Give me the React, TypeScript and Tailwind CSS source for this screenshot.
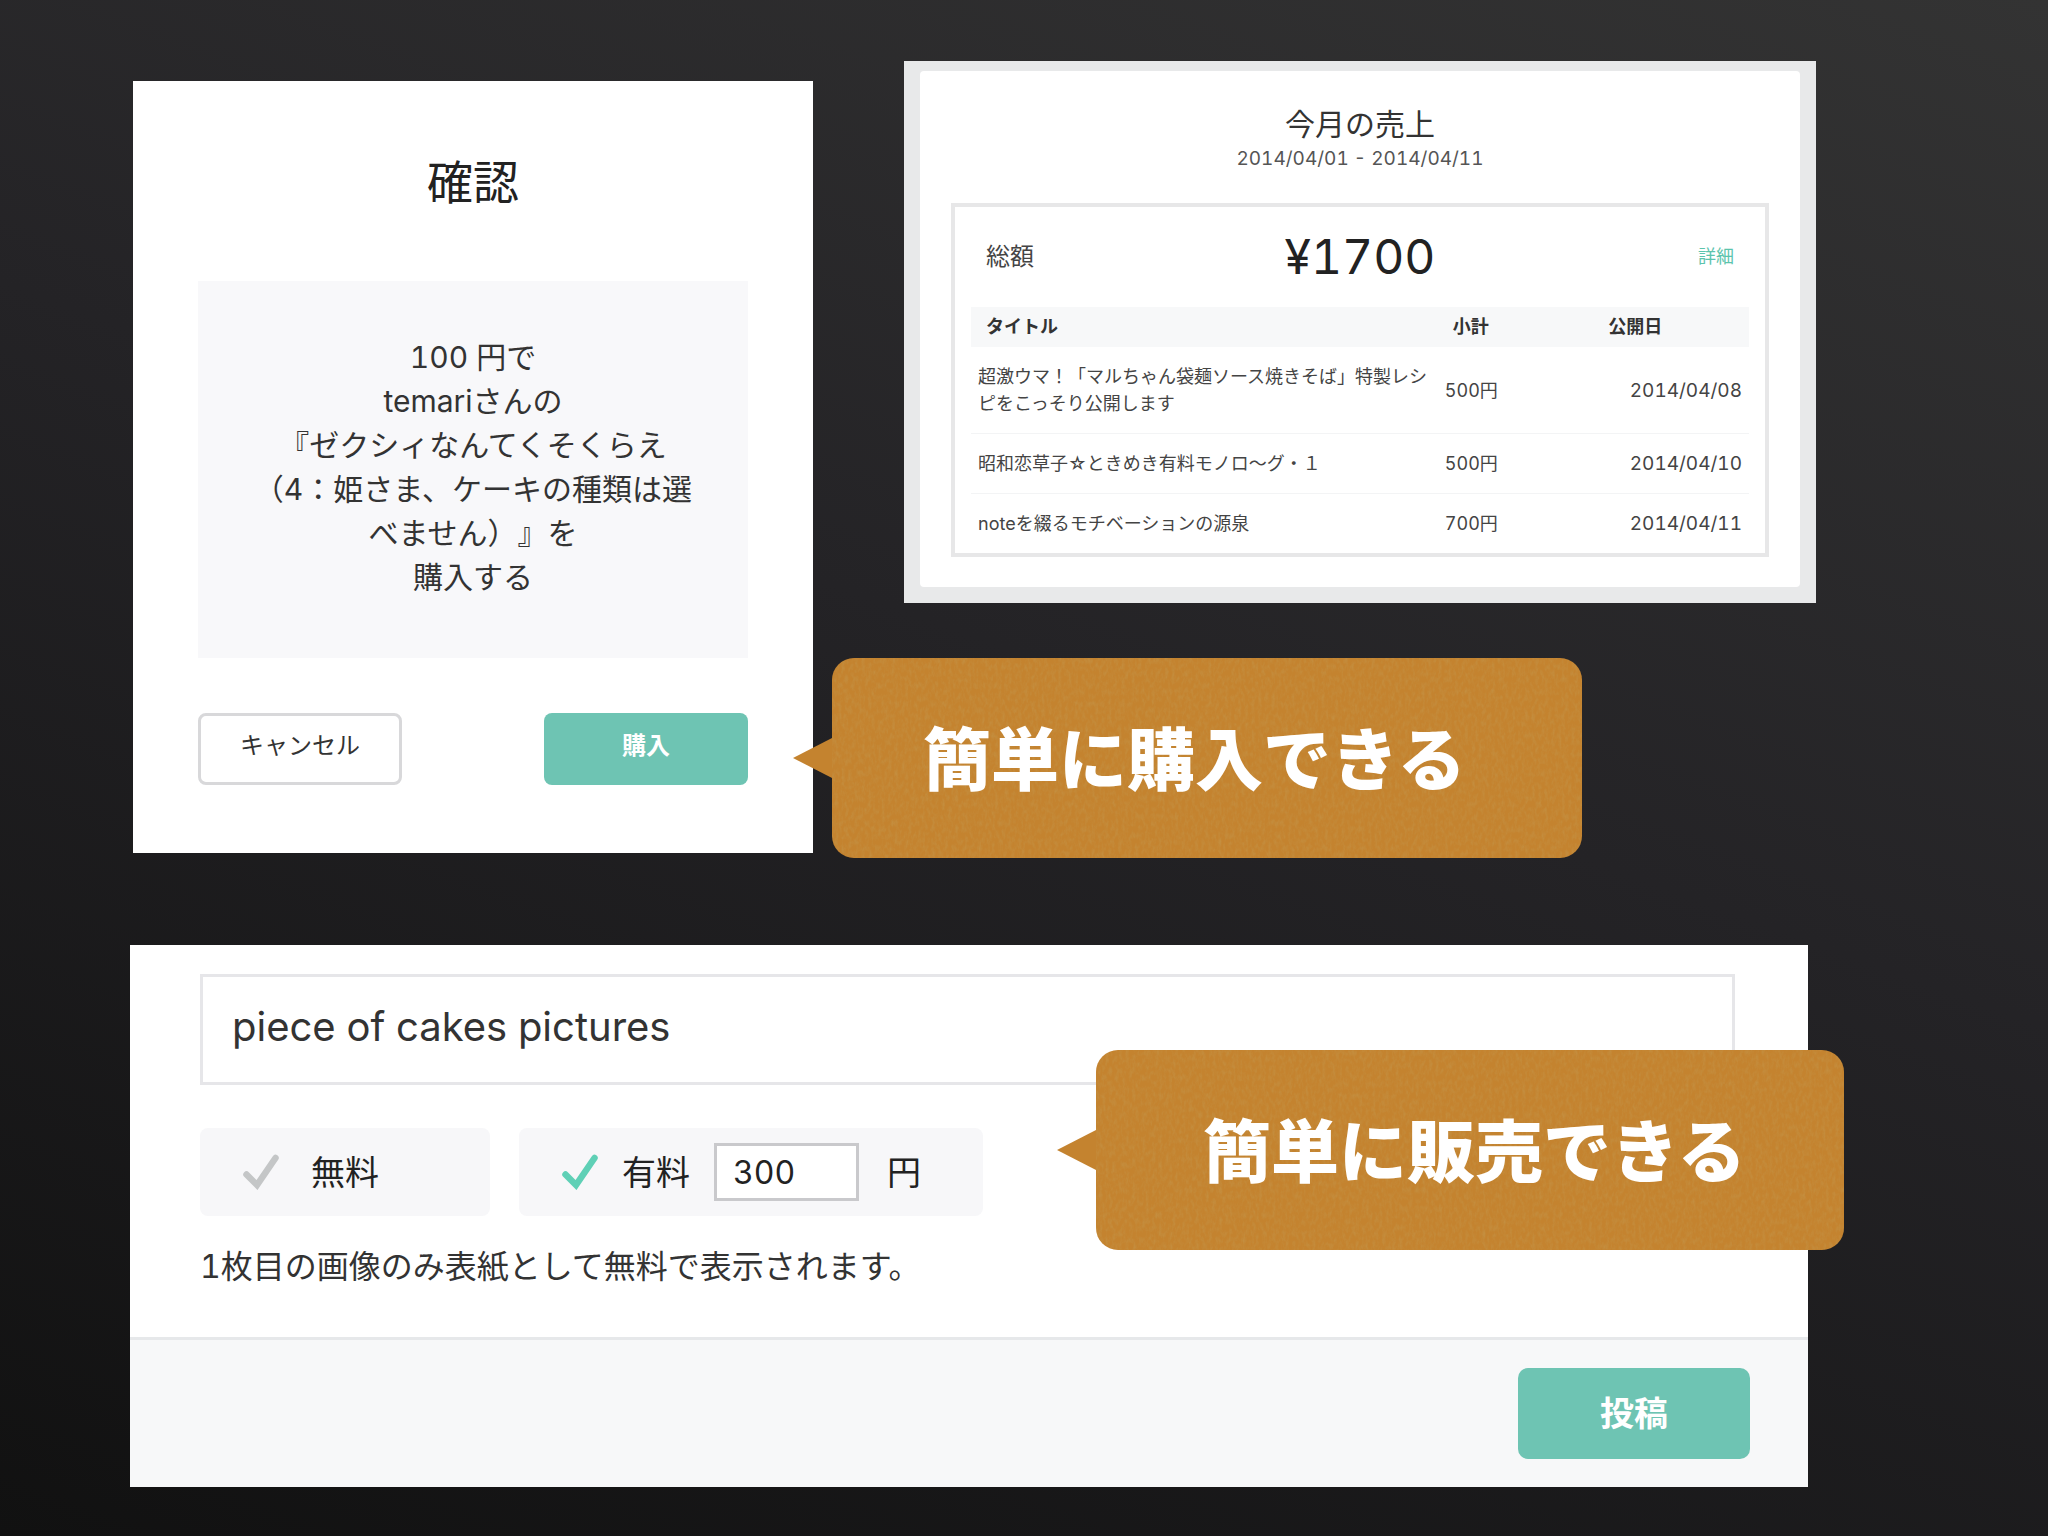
import { useState } from "react";

const sales = [
  { title: "超激ウマ！「マルちゃん袋麺ソース焼きそば」特製レシピをこっそり公開します", amount: "500円", date: "2014/04/08" },
  { title: "昭和恋草子☆ときめき有料モノロ〜グ・１", amount: "500円", date: "2014/04/10" },
  { title: "noteを綴るモチベーションの源泉", amount: "700円", date: "2014/04/11" },
];

function CheckIcon({ active }: { active: boolean }) {
  return (
    <svg
      viewBox="0 0 36 36"
      className={active ? "size-9 text-[#5fd0b6]" : "size-9 text-[#c4c6c7]"}
      fill="none"
      stroke="currentColor"
      aria-hidden="true"
    >
      <path d="M3.5 20.5 L14 31 L32.5 4" strokeWidth="6.5" strokeLinecap="round" strokeLinejoin="miter" />
    </svg>
  );
}

function Callout({ children, className }: { children: string; className: string }) {
  return (
    <div className={`absolute z-10 flex h-[200px] items-center rounded-[22px] bg-[#c4832f] pt-1 ${className}`}>
      <svg viewBox="0 0 40 40" className="absolute top-20 right-full h-10 w-[39px]" preserveAspectRatio="none" aria-hidden="true">
        <path d="M40 0 L0 20 L40 40 Z" fill="#c4832f" />
      </svg>
      <svg className="absolute inset-0 size-full rounded-[22px] opacity-40" aria-hidden="true">
        <filter id="paper" x="0" y="0" width="100%" height="100%">
          <feTurbulence type="fractalNoise" baseFrequency="0.3 0.16" numOctaves="3" seed="4" />
          <feColorMatrix values="0 0 0 0 0.55  0 0 0 0 0.35  0 0 0 0 0.1  1.8 0 0 0 -0.7" />
        </filter>
        <rect width="100%" height="100%" filter="url(#paper)" />
      </svg>
      <p className="relative text-[68px] leading-none font-black whitespace-nowrap text-white">{children}</p>
    </div>
  );
}

function ConfirmDialog() {
  return (
    <section className="relative mt-5 bg-white px-[65px] pt-[77px] pb-[68px]">
      <h2 className="text-center text-[46px] leading-[48px] text-[#222]">確認</h2>
      <p className="mt-[75px] bg-[#f8f8fa] pt-[54px] pb-[59px] text-center text-[30px] leading-[44px] text-[#333]">
        100 円で
        <br />
        temariさんの
        <br />
        『ゼクシィなんてくそくらえ
        <br />
        （4：姫さま、ケーキの種類は選
        <br />
        べません）』を
        <br />
        購入する
      </p>
      <div className="mt-[55px] flex justify-between">
        <button className="h-[72px] w-[204px] rounded-lg border-3 border-[#d8d8da] bg-white pb-1.5 text-2xl text-[#333]">
          キャンセル
        </button>
        <button className="h-[72px] w-[204px] rounded-lg bg-[#6ec4b3] pb-1.5 text-2xl font-bold text-white">購入</button>
      </div>
      <Callout className="top-[577px] left-full ml-[19px] w-[750px] pl-[91px]">簡単に購入できる</Callout>
    </section>
  );
}

function SalesReport() {
  return (
    <section className="self-start bg-[#e8e9ea] px-4 pt-2.5 pb-4">
      <div className="rounded-sm bg-white px-[31px] pt-[35px] pb-[30px]">
        <h2 className="text-center text-[30px] leading-9 text-[#333]">今月の売上</h2>
        <p className="mt-[3px] text-center text-[19px] leading-7 text-[#555]">2014/04/01 - 2014/04/11</p>
        <div className="mt-[30px] border-4 border-[#e7e7e8] px-4">
          <div className="grid grid-cols-3 items-center px-[15px] py-5">
            <span className="text-2xl text-[#444]">総額</span>
            <strong className="text-center text-[48px] leading-[60px] font-normal text-[#222]">¥1700</strong>
            <a href="#detail" className="justify-self-end text-lg text-[#5cc4ad]">
              詳細
            </a>
          </div>
          <table className="w-full table-fixed text-left text-[#444]">
            <thead className="bg-[#f7f8f9] text-lg text-[#333]">
              <tr className="h-10">
                <th className="w-[60%] pl-[15px] font-bold">タイトル</th>
                <th className="w-[21%] pl-[15px] font-bold">小計</th>
                <th className="w-[19%] pl-[7px] font-bold">公開日</th>
              </tr>
            </thead>
            <tbody>
              {sales.map((s) => (
                <tr key={s.date} className="border-b border-[#f3f4f5] last:border-b-0">
                  <td className="py-4 pl-[7px] text-lg leading-[27px]">{s.title}</td>
                  <td className="pl-[7px] text-lg leading-[27px]">{s.amount}</td>
                  <td className="pr-[7px] text-right text-[19px] leading-[27px]">{s.date}</td>
                </tr>
              ))}
            </tbody>
          </table>
        </div>
      </div>
    </section>
  );
}

function PostForm() {
  const [title, setTitle] = useState("piece of cakes pictures");
  const [price, setPrice] = useState("300");
  const [paid, setPaid] = useState(true);

  return (
    <form className="relative mt-[92px] mr-2 bg-white" onSubmit={(e) => e.preventDefault()}>
      <div className="pt-[29px] pr-[73px] pb-[50px] pl-[70px]">
        <input
          aria-label="タイトル"
          value={title}
          onChange={(e) => setTitle(e.target.value)}
          className="h-[111px] w-full border-3 border-[#e6e6e9] bg-white px-[29px] pb-1.5 text-[40px] text-[#333] outline-none"
        />
        <div className="mt-[43px] flex gap-[29px] text-[34px] text-[#222]">
          <label className="flex h-[88px] w-[290px] items-center gap-8 rounded-lg bg-[#f7f7f9] pl-[43px]">
            <input type="radio" name="plan" className="sr-only" checked={!paid} onChange={() => setPaid(false)} />
            <CheckIcon active={!paid} />
            無料
          </label>
          <div className="flex h-[88px] w-[464px] items-center rounded-lg bg-[#f7f7f9] pl-[43px]">
            <label className="flex items-center gap-6">
              <input type="radio" name="plan" className="sr-only" checked={paid} onChange={() => setPaid(true)} />
              <CheckIcon active={paid} />
              有料
            </label>
            <input
              id="price"
              value={price}
              onChange={(e) => setPrice(e.target.value)}
              className="ml-6 h-[58px] w-[145px] border-3 border-[#c9c9cc] bg-white px-4 text-[32px] outline-none"
            />
            <label htmlFor="price" className="ml-7">
              円
            </label>
          </div>
        </div>
        <p className="mt-[31px] text-[32px] leading-10 text-[#333]">1枚目の画像のみ表紙として無料で表示されます。</p>
      </div>
      <div className="flex justify-end border-t-3 border-[#e6e8ea] bg-[#f7f8f9] py-7 pr-[58px]">
        <button className="h-[91px] w-[232px] rounded-[10px] bg-[#6ec4b3] text-[34px] font-bold text-white">投稿</button>
      </div>
      <Callout className="top-[105px] -right-9 w-[748px] pl-[107px]">簡単に販売できる</Callout>
    </form>
  );
}

export default function App() {
  return (
    <main className="min-h-screen bg-[linear-gradient(200deg,#333333_0%,#242326_45%,#111111_100%)] pt-[61px] pr-[232px] pb-[49px] pl-[130px] font-['Inter','Noto_Sans_CJK_JP',sans-serif] tabular-nums [text-spacing-trim:space-all]">
      <div className="ml-[3px] grid grid-cols-[680fr_912fr] gap-[91px]">
        <ConfirmDialog />
        <SalesReport />
      </div>
      <PostForm />
    </main>
  );
}
